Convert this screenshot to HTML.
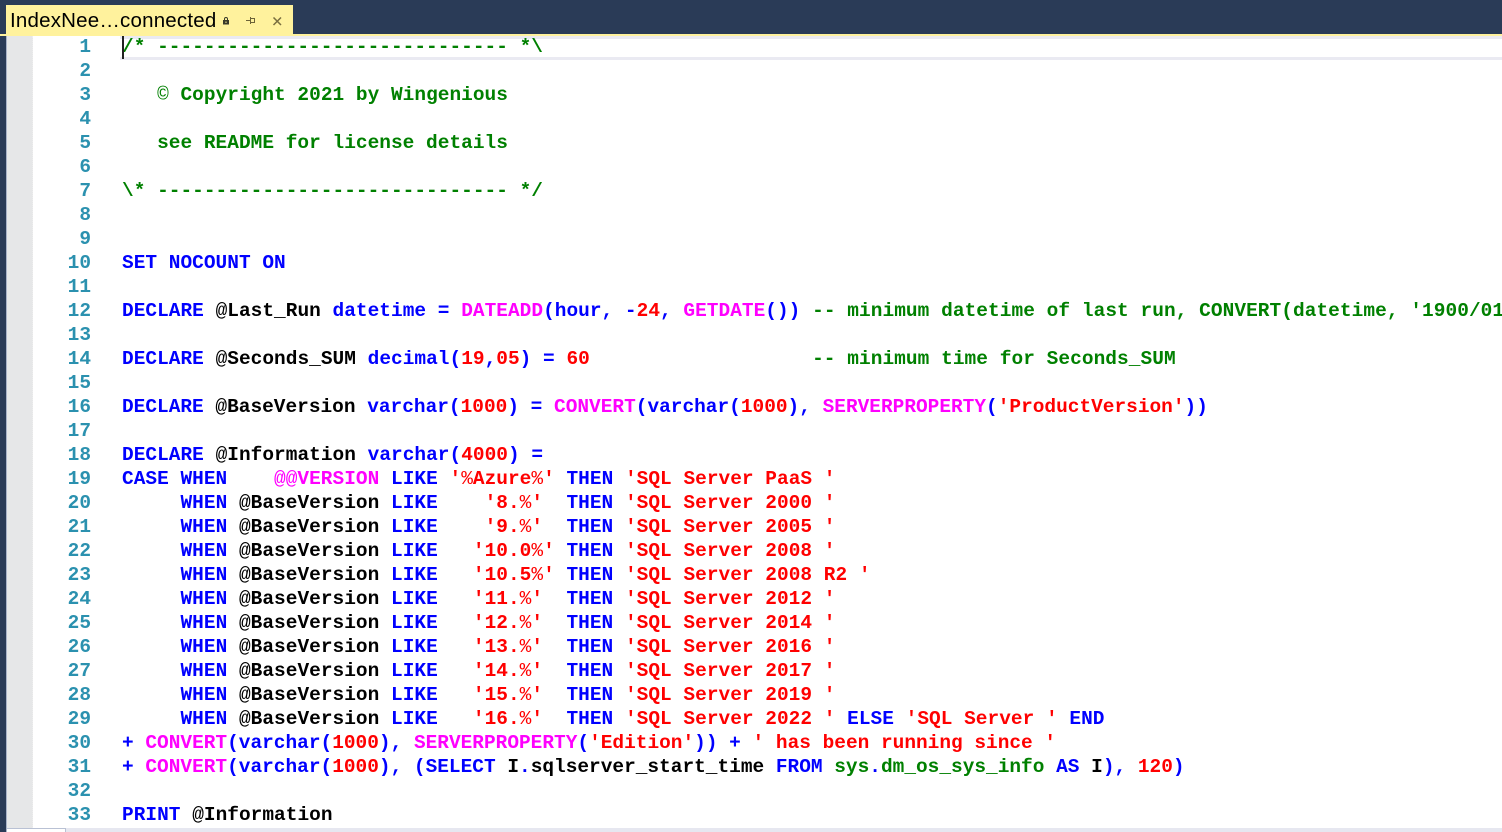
<!DOCTYPE html>
<html><head><meta charset="utf-8">
<style>
html,body{margin:0;padding:0;width:1502px;height:832px;overflow:hidden;background:#fff}
#top{position:absolute;left:0;top:0;width:1502px;height:34px;background:#2a3b57}
#stripe{position:absolute;left:0;top:34px;width:1502px;height:2px;background:#fff29d}
#left{position:absolute;left:0;top:36px;width:6px;height:796px;background:#2a3b57}
#left2{position:absolute;left:6px;top:36px;width:1px;height:796px;background:#a9b3c8}
#margin{position:absolute;left:7px;top:36px;width:25px;height:792px;background:#e6e7e8;border-right:1px dotted #eee}
#tab{position:absolute;left:6px;top:5px;width:287px;height:29px;background:#fff29d}
#title{position:absolute;left:4px;top:4px;font:20.5px/24px "Liberation Sans",sans-serif;color:#000;white-space:pre;letter-spacing:.2px}
#cl1,#cl2{position:absolute;left:120px;width:1382px;height:3px;background:#eaeaf2}
#cl1{top:36px}#cl2{top:57px}
#caret{position:absolute;left:122px;top:36px;width:2px;height:23px;background:#222}
#bot{position:absolute;left:7px;top:828px;width:1495px;height:4px;background:#e6e7f0}
#thumb{position:absolute;left:7px;top:828px;width:59px;height:4px;background:#fff;border-top:1px solid #b9c1d4;border-right:1px solid #b9c1d4;box-sizing:border-box}
.n,.l{position:absolute;height:24px;font:bold 19.45px/24px "Liberation Mono",monospace;white-space:pre;margin-top:1px}
.n{left:50px;width:41px;text-align:right;color:#2b91af}
.l{left:122px;width:1380px;overflow:hidden;color:#000;letter-spacing:.03px}
b{font-weight:inherit}
u{text-decoration:none;font-weight:normal}
.g{color:#008000}.k{color:#0000ff}.r{color:#ff0000}.m{color:#ff00ff}
.c{letter-spacing:.065px}
.t{letter-spacing:.01px}
</style></head><body>
<div id="top"></div><div id="stripe"></div><div id="left"></div><div id="left2"></div><div id="margin"></div>
<div id="tab"><div id="title">IndexNee…connected</div>
<svg style="position:absolute;left:216px;top:12px" width="70" height="18" viewBox="0 0 70 18">
<path d="M2.500 3.500V2a1 1 0 0 1 3 0V3.500" fill="none" stroke="#3a3a2a" stroke-width="1"/><path d="M1 3h6v4.500H1zM3.500 4.500v1.500h1V4.500z" fill="#3a3a2a" fill-rule="evenodd"/>
<path d="M24 3.500h4.500M28.500 0v7M28.500 1.500h4v4h-4" fill="none" stroke="#6d6338" stroke-width="1"/>
<path d="M51.500 .5l7.500 7.500M59 .5l-7.500 7.500" stroke="#7a6f40" stroke-width="1.500" fill="none"/>
</svg></div>
<div id="cl1"></div><div id="cl2"></div>
<div class="n" style="top:34px">1</div><div class="l g" style="top:34px">/* ------------------------------ *\</div>
<div class="n" style="top:58px">2</div>
<div class="n" style="top:82px">3</div><div class="l g" style="top:82px">   <u>©</u> Copyright 2021 by Wingenious</div>
<div class="n" style="top:106px">4</div>
<div class="n" style="top:130px">5</div><div class="l g" style="top:130px">   see README for license details</div>
<div class="n" style="top:154px">6</div>
<div class="n" style="top:178px">7</div><div class="l g" style="top:178px">\* ------------------------------ */</div>
<div class="n" style="top:202px">8</div>
<div class="n" style="top:226px">9</div>
<div class="n" style="top:250px">10</div><div class="l k" style="top:250px">SET NOCOUNT ON</div>
<div class="n" style="top:274px">11</div>
<div class="n" style="top:298px">12</div><div class="l" style="top:298px"><b class="k">DECLARE</b> <u>@</u>Last_Run <b class="k">datetime =</b> <b class="m">DATEADD</b><b class="k">(hour, -</b><b class="r">24</b><b class="k">,</b> <b class="m">GETDATE</b><b class="k">())</b> <b class="g c">-- minimum datetime of last run, CONVERT(datetime, '1900/01/01 00:00:00')</b></div>
<div class="n" style="top:322px">13</div>
<div class="n" style="top:346px">14</div><div class="l" style="top:346px"><b class="k">DECLARE</b> <u>@</u>Seconds_SUM <b class="k">decimal(</b><b class="r">19</b><b class="k">,</b><b class="r">05</b><b class="k">) =</b> <b class="r">60</b>                   <b class="g c">-- minimum time for Seconds_SUM</b></div>
<div class="n" style="top:370px">15</div>
<div class="n" style="top:394px">16</div><div class="l t" style="top:394px"><b class="k">DECLARE</b> <u>@</u>BaseVersion <b class="k">varchar(</b><b class="r">1000</b><b class="k">) =</b> <b class="m">CONVERT</b><b class="k">(varchar(</b><b class="r">1000</b><b class="k">),</b> <b class="m">SERVERPROPERTY</b><b class="k">(</b><b class="r">'ProductVersion'</b><b class="k">))</b></div>
<div class="n" style="top:418px">17</div>
<div class="n" style="top:442px">18</div><div class="l" style="top:442px"><b class="k">DECLARE</b> <u>@</u>Information <b class="k">varchar(</b><b class="r">4000</b><b class="k">) =</b></div>
<div class="n" style="top:466px">19</div><div class="l" style="top:466px"><b class="k">CASE WHEN</b>    <b class="m"><u>@@</u>VERSION</b> <b class="k">LIKE</b> <b class="r">'<u>%</u>Azure<u>%</u>'</b> <b class="k">THEN</b> <b class="r">'SQL Server PaaS '</b></div>
<div class="n" style="top:490px">20</div><div class="l" style="top:490px">     <b class="k">WHEN</b> <u>@</u>BaseVersion <b class="k">LIKE</b>    <b class="r">'8.<u>%</u>'</b>  <b class="k">THEN</b> <b class="r">'SQL Server 2000 '</b></div>
<div class="n" style="top:514px">21</div><div class="l" style="top:514px">     <b class="k">WHEN</b> <u>@</u>BaseVersion <b class="k">LIKE</b>    <b class="r">'9.<u>%</u>'</b>  <b class="k">THEN</b> <b class="r">'SQL Server 2005 '</b></div>
<div class="n" style="top:538px">22</div><div class="l" style="top:538px">     <b class="k">WHEN</b> <u>@</u>BaseVersion <b class="k">LIKE</b>   <b class="r">'10.0<u>%</u>'</b> <b class="k">THEN</b> <b class="r">'SQL Server 2008 '</b></div>
<div class="n" style="top:562px">23</div><div class="l" style="top:562px">     <b class="k">WHEN</b> <u>@</u>BaseVersion <b class="k">LIKE</b>   <b class="r">'10.5<u>%</u>'</b> <b class="k">THEN</b> <b class="r">'SQL Server 2008 R2 '</b></div>
<div class="n" style="top:586px">24</div><div class="l" style="top:586px">     <b class="k">WHEN</b> <u>@</u>BaseVersion <b class="k">LIKE</b>   <b class="r">'11.<u>%</u>'</b>  <b class="k">THEN</b> <b class="r">'SQL Server 2012 '</b></div>
<div class="n" style="top:610px">25</div><div class="l" style="top:610px">     <b class="k">WHEN</b> <u>@</u>BaseVersion <b class="k">LIKE</b>   <b class="r">'12.<u>%</u>'</b>  <b class="k">THEN</b> <b class="r">'SQL Server 2014 '</b></div>
<div class="n" style="top:634px">26</div><div class="l" style="top:634px">     <b class="k">WHEN</b> <u>@</u>BaseVersion <b class="k">LIKE</b>   <b class="r">'13.<u>%</u>'</b>  <b class="k">THEN</b> <b class="r">'SQL Server 2016 '</b></div>
<div class="n" style="top:658px">27</div><div class="l" style="top:658px">     <b class="k">WHEN</b> <u>@</u>BaseVersion <b class="k">LIKE</b>   <b class="r">'14.<u>%</u>'</b>  <b class="k">THEN</b> <b class="r">'SQL Server 2017 '</b></div>
<div class="n" style="top:682px">28</div><div class="l" style="top:682px">     <b class="k">WHEN</b> <u>@</u>BaseVersion <b class="k">LIKE</b>   <b class="r">'15.<u>%</u>'</b>  <b class="k">THEN</b> <b class="r">'SQL Server 2019 '</b></div>
<div class="n" style="top:706px">29</div><div class="l" style="top:706px">     <b class="k">WHEN</b> <u>@</u>BaseVersion <b class="k">LIKE</b>   <b class="r">'16.<u>%</u>'</b>  <b class="k">THEN</b> <b class="r">'SQL Server 2022 '</b> <b class="k">ELSE</b> <b class="r">'SQL Server '</b> <b class="k">END</b></div>
<div class="n" style="top:730px">30</div><div class="l t" style="top:730px"><b class="k">+</b> <b class="m">CONVERT</b><b class="k">(varchar(</b><b class="r">1000</b><b class="k">),</b> <b class="m">SERVERPROPERTY</b><b class="k">(</b><b class="r">'Edition'</b><b class="k">)) +</b> <b class="r">' has been running since '</b></div>
<div class="n" style="top:754px">31</div><div class="l t" style="top:754px"><b class="k">+</b> <b class="m">CONVERT</b><b class="k">(varchar(</b><b class="r">1000</b><b class="k">), (SELECT</b> I<b class="k">.</b>sqlserver_start_time <b class="k">FROM</b> <b class="g">sys</b><b class="k">.</b><b class="g">dm_os_sys_info</b> <b class="k">AS</b> I<b class="k">),</b> <b class="r">120</b><b class="k">)</b></div>
<div class="n" style="top:778px">32</div>
<div class="n" style="top:802px">33</div><div class="l" style="top:802px"><b class="k">PRINT</b> <u>@</u>Information</div>
<div id="caret"></div>
<div id="bot"></div><div id="thumb"></div>
</body></html>
